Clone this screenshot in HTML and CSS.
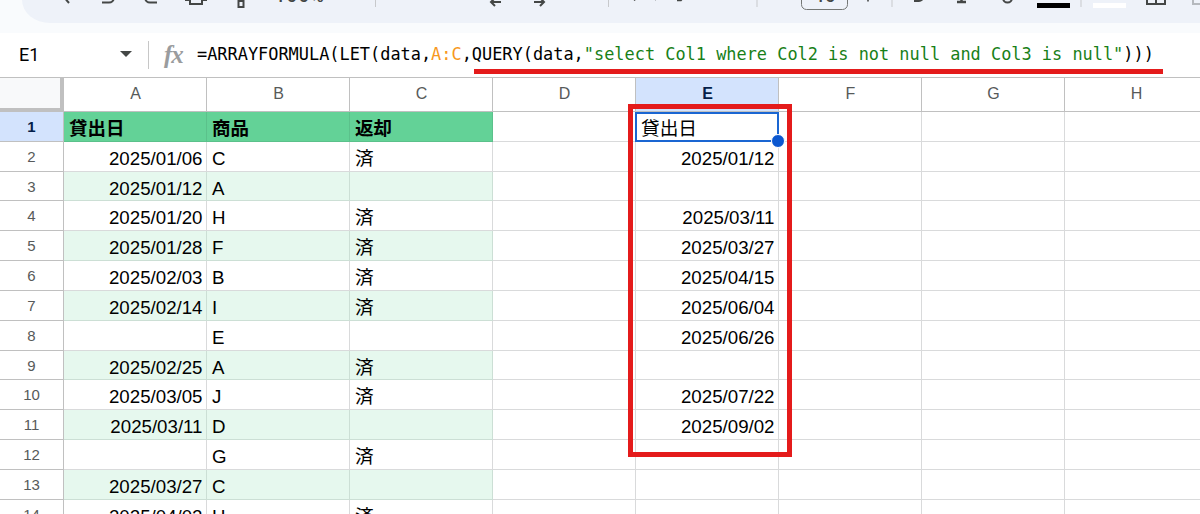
FILE: index.html
```html
<!DOCTYPE html>
<html lang="ja">

<head>
  <meta charset="utf-8">
  <title>Sheet</title>
  <link rel="stylesheet" href="styles.css">
</head>

<body>

  <header class="top">
    <div class="toolbar">
      <svg width="1178" height="23" viewBox="22 0 1178 23" fill="none" stroke="#444746" stroke-width="2">
        <!-- search, undo, redo -->
        <path d="M63 -4L69 3"/>
        <path d="M102 2.500H109A5 5 0 0 0 114 -2"/>
        <path d="M157 2.500H150A5 5 0 0 1 145 -2"/>
        <!-- print, paint format -->
        <path d="M185 0H190M202 0H207M190 -3V4H202V-3"/>
        <path d="M241 -4V1M238.500 1H243.500V7H238.500Z"/>
        <!-- decimals -->
        <path d="M501 2H491M495 -2L491 2L495 6"/>
        <path d="M534 2H544M540 -2L544 2L540 6"/>
        <!-- font name -->
        <path d="M634 0.500L637 -2M655 0L657 -2M677 0.500H681L683 -2" stroke-width="1.500"/>
        <rect x="801.500" y="-20" width="46" height="29.500" rx="5" stroke-width="1" stroke="#747775"/>
        <path d="M868 -4V1.500" stroke-width="1.600"/>
        <path d="M914 1H919A4 4 0 0 0 923 -3"/>
        <path d="M957 2H966M961.500 2V-4" stroke-width="2.500"/>
        <path d="M1003 -2A4.500 4.500 0 0 0 1012 -2"/>
        <path d="M1037 5.500H1070" stroke="#000" stroke-width="5"/>
        <path d="M1093 5.500H1126" stroke="#fff" stroke-width="5"/>
        <path d="M1147 -5V4H1165V-5M1156 -5V4M1147 -3H1165"/>
        <path d="M1193 -2V4H1200" stroke="#b5b9be"/>
        <path d="M375.500 0V7M608.500 0V7M757 0V7M892 0V7M1081 0V7" stroke="#c7c9cc" stroke-width="1"/>
      </svg>
      <span class="zoom">100%</span>
      <span class="font-size">10</span>
    </div>
  </header>

  <div class="formula-bar">
    <span class="cell-name">E1</span>
    <span class="arrow"></span>
    <span class="divider"></span>
    <span class="fx">fx</span>
    <div class="formula">=ARRAYFORMULA(LET(data,<span class="range">A:C</span>,QUERY(data,<span class="string">"select Col1 where Col2 is not null and Col3 is null"</span>)))<i class="underline"></i></div>
  </div>

  <main class="sheet" id="sheet"></main>

  <script src="script.js"></script>
</body>

</html>
```
FILE: styles.css
```css
body {
  margin: 0;
  width: 1200px;
  height: 514px;
  overflow: hidden;
  background-color: white;
  font-family: "Liberation Sans", "Noto Sans CJK JP", sans-serif;
  color: #000;
}

.top {
  height: 33px;
  padding-left: 22px;
  background-color: #f9fbfd;
}

.toolbar {
  position: relative;
  height: 23px;
  overflow: hidden;
  background-color: #eef2f9;
  border-bottom-left-radius: 28px 23px;
}

.toolbar svg { display: block;}

.zoom,
.font-size {
  position: absolute;
  font-family: Roboto, sans-serif;
  font-size: 18px;
  font-weight: 500;
  line-height: 20px;
  color: #444746;
}

.zoom { left: 253px; top: -14px; letter-spacing: 1.6px;}
.font-size { left: 793px; top: -14px;}

.formula-bar {
  display: flex;
  align-items: center;
  height: 44px;
  box-sizing: border-box;
  padding: 0 0 2px 19px;
}

.cell-name {
  width: 101px;
  font-family: Roboto, sans-serif;
  font-size: 18px;
}

.arrow {
  border: 6px solid transparent;
  border-top-color: #444746;
  border-bottom: 0;
}

.divider {
  width: 1px;
  height: 28px;
  margin: 2px 15px 0 16px;
  background-color: #c7c7c7;
}

.fx {
  width: 33px;
  padding-top: 2px;
  box-sizing: border-box;
  font-family: "Liberation Serif", serif;
  font-size: 25px;
  font-style: italic;
  font-weight: bold;
  letter-spacing: -1px;
  color: #9a9c9e;
}

.formula {
  position: relative;
  font-family: "DejaVu Sans Mono", monospace;
  font-size: 16.92px;
  line-height: 30px;
  white-space: pre;
}

.range { color: #f7981d;}
.string { color: #188018;}

.underline {
  position: absolute;
  left: 277px;
  top: 30px;
  width: 689px;
  height: 5px;
  background-color: #e41b1b;
}

.sheet {
  position: relative;
  display: grid;
  grid-template-columns: 64px repeat(8, 143px);
  grid-template-rows: 34px;
  grid-auto-rows: 29.84px;
  border-top: 1px solid #c0c0c0;
}

.col-head,
.row-head,
.cell {
  box-sizing: border-box;
  border-right: 1px solid #d9dadb;
  border-bottom: 1px solid #d9dadb;
  white-space: nowrap;
}

.corner {
  background-color: #f8f9fa;
  border-right: 4px solid #c0c0c0;
  border-bottom: 4px solid #c0c0c0;
}

.col-head,
.row-head {
  border-color: #c0c0c0;
  font-size: 16px;
  text-align: center;
  color: #575a5a;
}

.col-head { padding-left: 1px; line-height: 32px;}
.row-head { font-size: 15px; line-height: 29px;}

.active {
  background-color: #d3e3fd;
  font-weight: bold;
  color: #041e49;
}

.cell {
  padding: 3px 3px 0 5px;
  font-size: 18.7px;
  line-height: 28px;
}

.date { padding-right: 3.500px; text-align: right;}
.band { background-color: #e6f8ee; border-color: #ccdfd5;}

.title {
  background-color: #63d297;
  border-color: #5bc18b;
  font-size: 18.5px;
  font-weight: bold;
}

.selected {
  position: relative;
  margin-left: -1px;
  padding: 1px 0 0 4px;
  border: 2px solid #1a66d2;
}

.selected::after {
  content: "";
  position: absolute;
  z-index: 3;
  right: -8px;
  bottom: -8px;
  width: 12px;
  height: 12px;
  border: 1px solid white;
  border-radius: 50%;
  background-color: #0b57d0;
}

.frame {
  position: absolute;
  z-index: 2;
  left: 628px;
  top: 26px;
  width: 164px;
  height: 353px;
  box-sizing: border-box;
  border: 5px solid #e41b1b;
}
```
FILE: script.js
```javascript
const columns = ['A', 'B', 'C', 'D', 'E', 'F', 'G', 'H']

// A, B, C, E
const rows = [
  ['貸出日', '商品', '返却', '貸出日'],
  ['2025/01/06', 'C', '済', '2025/01/12'],
  ['2025/01/12', 'A', '', ''],
  ['2025/01/20', 'H', '済', '2025/03/11'],
  ['2025/01/28', 'F', '済', '2025/03/27'],
  ['2025/02/03', 'B', '済', '2025/04/15'],
  ['2025/02/14', 'I', '済', '2025/06/04'],
  ['', 'E', '', '2025/06/26'],
  ['2025/02/25', 'A', '済', ''],
  ['2025/03/05', 'J', '済', '2025/07/22'],
  ['2025/03/11', 'D', '', '2025/09/02'],
  ['', 'G', '済', ''],
  ['2025/03/27', 'C', '', ''],
  ['2025/04/02', 'H', '済', '']
]

const sheet = document.getElementById('sheet')

function add(className, text) {
  const el = document.createElement('div')
  el.className = className
  el.textContent = text || ''
  sheet.appendChild(el)
}

add('corner')
columns.forEach(name => add(name === 'E' ? 'col-head active' : 'col-head', name))

rows.forEach((row, i) => {
  add(i === 0 ? 'row-head active' : 'row-head', i + 1)

  columns.forEach((name, c) => {
    const text = c < 3 ? row[c] : name === 'E' ? row[3] : ''
    let className = 'cell'
    if (c < 3 && i === 0) className += ' title'
    if (c < 3 && i > 0 && i % 2 === 0) className += ' band'
    if (i > 0 && (name === 'A' || name === 'E')) className += ' date'
    if (i === 0 && name === 'E') className += ' selected'
    add(className, text)
  })
})

add('frame')
```
